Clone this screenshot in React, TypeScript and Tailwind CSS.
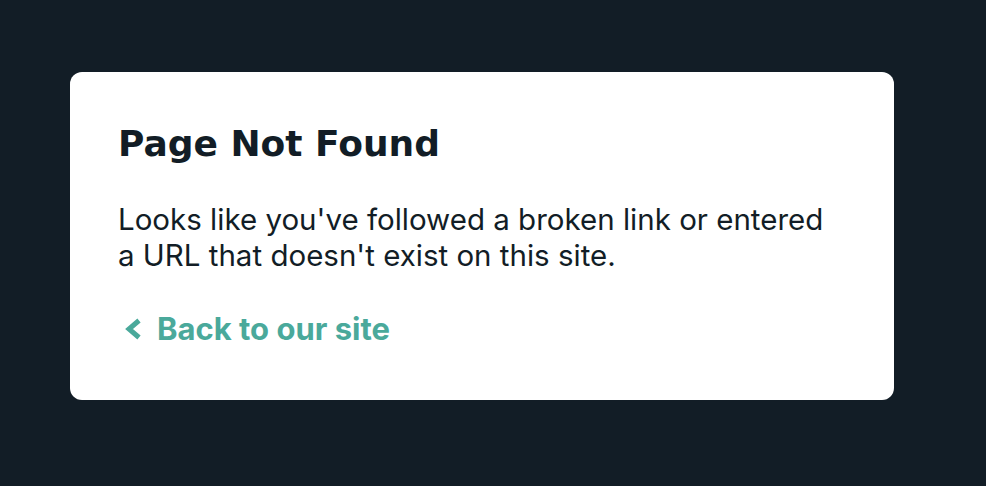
import React from "react";

export default function App() {
  return (
    <div className="min-h-[486px] w-full bg-[#121d26] pt-[72px] pl-[70px] font-['Inter','Noto_Sans',sans-serif]">
      <div className="flex h-[328px] w-[824px] flex-col items-start rounded-[12px] bg-white pl-12 pr-12 pt-[50px]">
        <h1 className="font-['DejaVu_Sans','Inter',sans-serif] text-[36px] font-bold leading-[44px] text-[#121d26]">
          Page Not Found
        </h1>
        <p className="mt-[35px] text-[29.5px] leading-[36px] text-[#121d26]">
          Looks like you've followed a broken link or entered a URL that doesn't exist on this site.
        </p>
        <a href="#" className="mt-[38px] flex items-center gap-[15px] text-[31px] font-bold leading-[36px] text-[#4aa99b]">
          <svg width="18" height="22" viewBox="0 0 18 22" className="ml-[6px]">
            <polyline points="15,2.5 5,11 15,19.5" fill="none" stroke="#4aa99b" strokeWidth="5" strokeLinecap="butt" strokeLinejoin="miter" />
          </svg>
          Back to our site
        </a>
      </div>
    </div>
  );
}
